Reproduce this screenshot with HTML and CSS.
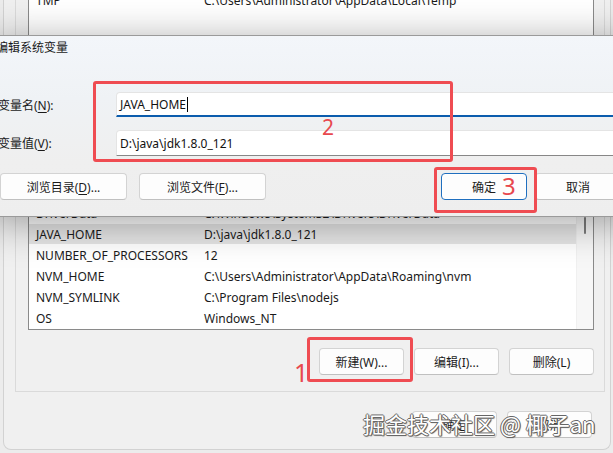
FILE: index.html
```html
<!DOCTYPE html>
<html lang="zh-CN">
<head>
    <meta charset="UTF-8">
    <meta name="viewport" content="width=device-width, initial-scale=1.0">
    <title>编辑系统变量</title>
    <link rel="stylesheet" href="styles.css">
</head>
<body>
<div class="desk">
    <!-- environment variables window (behind) -->
    <div class="env-window">
        <div class="group user-group">
            <div class="var-list user-list">
                <div class="var-rows">
                    <div class="var-row"><span class="var-name">TMP</span><span class="var-value">C:\Users\Administrator\AppData\Local\Temp</span></div>
                </div>
            </div>
        </div>

        <div class="group system-group">
            <div class="var-list system-list">
                <div class="var-rows">
                    <div class="var-row"><span class="var-name">DriverData</span><span class="var-value">C:\Windows\System32\Drivers\DriverData</span></div>
                    <div class="var-row selected"><span class="var-name">JAVA_HOME</span><span class="var-value">D:\java\jdk1.8.0_121</span></div>
                    <div class="var-row"><span class="var-name">NUMBER_OF_PROCESSORS</span><span class="var-value">12</span></div>
                    <div class="var-row"><span class="var-name">NVM_HOME</span><span class="var-value">C:\Users\Administrator\AppData\Roaming\nvm</span></div>
                    <div class="var-row"><span class="var-name">NVM_SYMLINK</span><span class="var-value">C:\Program Files\nodejs</span></div>
                    <div class="var-row"><span class="var-name">OS</span><span class="var-value">Windows_NT</span></div>
                </div>
                <div class="scrollbar"><div class="scroll-thumb"></div></div>
            </div>
            <div class="list-buttons">
                <button class="btn list-btn">新建(W)...</button>
                <button class="btn list-btn">编辑(I)...</button>
                <button class="btn list-btn">删除(L)</button>
            </div>
        </div>

        <div class="window-buttons">
            <button class="btn list-btn">确定</button>
            <button class="btn list-btn">取消</button>
        </div>
    </div>

    <!-- edit dialog (front) -->
    <div class="edit-dialog">
        <div class="dialog-title">编辑系统变量</div>
        <div class="dialog-form">
            <label class="field-label">变量名(<u>N</u>):</label>
            <div class="text-box focused">JAVA_HOME<span class="caret"></span></div>
            <label class="field-label">变量值(<u>V</u>):</label>
            <div class="text-box">D:\java\jdk1.8.0_121</div>
        </div>
        <div class="dialog-buttons">
            <div class="button-group">
                <button class="btn wide-btn">浏览目录(<u>D</u>)...</button>
                <button class="btn wide-btn">浏览文件(<u>F</u>)...</button>
            </div>
            <div class="button-group narrow">
                <button class="btn default-btn">确定</button>
                <button class="btn dialog-btn">取消</button>
            </div>
        </div>
    </div>

    <!-- red annotations -->
    <div class="mark mark-form"></div>
    <div class="mark-num num-2">2</div>
    <div class="mark mark-ok"></div>
    <div class="mark-num num-3">3</div>
    <div class="mark mark-new"></div>
    <div class="mark-num num-1">1</div>

    <div class="watermark">掘金技术社区 @ 椰子an</div>
</div>
</body>
</html>
```

FILE: styles.css
```css
* {
    box-sizing: border-box;
}
body {
    margin: 0;
    background-color: #ececec;
    font-family: "Noto Sans", "Noto Sans CJK SC", sans-serif;
    font-size: 12px;
    color: #1a1a1a;
    overflow: hidden;
}
.desk {
    position: relative;
    width: 613px;
    height: 453px;
    overflow: hidden;
}
u {
    text-decoration-thickness: 1px;
    text-underline-offset: 2px;
}

/* back window */
.env-window {
    margin-left: 3px;
    width: 608px;
    height: 470px;
    background-color: #f0f0f0;
    border: 1px solid #d2d2d2;
    border-top: none;
    border-radius: 0 0 8px 8px;
}
.group {
    margin: 0 5px 0 11px;
    border: 1px solid #dadada;
}
.user-group {
    margin-top: -20px;
    height: 140px;
    padding-top: 8px;
}
.system-group {
    margin-top: 10px;
    padding-top: 71px;
    padding-bottom: 16px;
}
.var-list {
    display: flex;
    margin: 0 10px 0 12px;
    background-color: #fff;
    border: 1px solid #8a8a8a;
}
.user-list {
    height: 120px;
}
.system-list {
    height: 128px;
    overflow: hidden;
}
.var-rows {
    flex: 1;
}
.var-row {
    display: flex;
    align-items: center;
    height: 21px;
    padding-left: 7px;
    white-space: nowrap;
}
.var-row.selected {
    background-color: #e6e6e6;
    border-bottom: 1px solid #fff;
}
.var-name {
    width: 168px;
}
.scrollbar {
    width: 17px;
    background-color: #f7f7f7;
    border-left: 1px solid #f0f0f0;
}
.scroll-thumb {
    width: 2px;
    height: 17px;
    margin: 14px 0 0 7px;
    background-color: #7e7e7e;
    border-radius: 1px;
}
.list-buttons {
    display: flex;
    justify-content: flex-end;
    gap: 10px;
    margin-top: 18px;
    padding-right: 10px;
}
.window-buttons {
    display: flex;
    justify-content: flex-end;
    gap: 10px;
    margin-top: 19px;
    padding-right: 18px;
}

/* buttons */
.btn {
    height: 27px;
    padding: 0;
    font-family: inherit;
    font-size: 12px;
    color: #1b1b1b;
    background-color: #fdfdfd;
    border: 1px solid #d3d3d3;
    border-bottom-color: #c0c0c0;
    border-radius: 4px;
}
.list-btn {
    width: 85px;
}
.wide-btn {
    width: 127px;
}
.dialog-btn,
.default-btn {
    width: 86px;
}
.default-btn {
    border: 1px solid #1f6fbf;
    box-shadow: inset 0 0 0 1px #fff;
}

/* front dialog */
.edit-dialog {
    position: absolute;
    top: 35px;
    left: -13px;
    width: 648px;
    height: 182px;
    padding: 4px 13px 0 12px;
    background: linear-gradient(180deg, #f3f6fa 0%, #eff2f5 35%, #efefef 70%, #eeeeee 100%);
    border: 1px solid #9a9a9a;
    border-radius: 8px;
    box-shadow: 0 6px 40px rgba(0, 0, 0, 0.36);
}
.dialog-title {
    margin-left: -4px;
    line-height: 16px;
}
.dialog-form {
    display: grid;
    grid-template-columns: 116px 1fr;
    row-gap: 13px;
    align-items: center;
    margin-top: 36px;
}
.field-label {
    margin-left: -2px;
}
.text-box {
    display: flex;
    align-items: center;
    height: 26px;
    padding-left: 3px;
    font-size: 12px;
    color: #111;
    background-color: #fff;
    border: 1px solid #e4e4e4;
    border-bottom: 1px solid #878787;
    border-radius: 4px 4px 0 0;
}
.text-box.focused {
    height: 25px;
    border-bottom: 2px solid #0b5cad;
}
.caret {
    width: 1px;
    height: 15px;
    margin-left: 1px;
    background-color: #000;
}
.dialog-buttons {
    display: flex;
    justify-content: space-between;
    margin-top: 17px;
}
.button-group {
    display: flex;
    gap: 12px;
}
.button-group.narrow {
    gap: 8px;
}

/* annotations */
.mark {
    position: absolute;
    border: 3px solid #ef4c52;
    border-radius: 3px;
}
.mark-form {
    left: 93px;
    top: 81px;
    width: 360px;
    height: 81px;
}
.mark-ok {
    left: 434px;
    top: 167px;
    width: 103px;
    height: 46px;
}
.mark-new {
    left: 307px;
    top: 337px;
    width: 106px;
    height: 45px;
}
.mark-num {
    position: absolute;
    font-family: "Noto Sans", sans-serif;
    line-height: 1;
    color: #e8484e;
}
.num-2 {
    left: 322px;
    top: 117px;
    font-size: 21px;
}
.num-3 {
    left: 502px;
    top: 174px;
    font-size: 24px;
}
.num-1 {
    left: 294px;
    top: 360px;
    font-size: 25px;
}
.watermark {
    position: absolute;
    left: 363px;
    top: 412px;
    font-family: "Noto Sans CJK SC", sans-serif;
    font-size: 22px;
    line-height: 1;
    color: #fff;
    white-space: nowrap;
    text-shadow: 1px 0 0 #666, -1px 0 0 #666, 0 1px 0 #666, 0 -1px 0 #666, 1px 1px 1px #555;
}
```
